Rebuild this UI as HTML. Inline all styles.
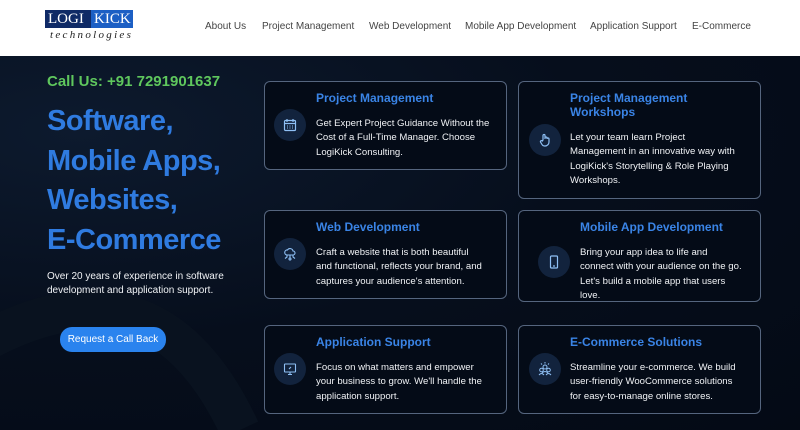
<!DOCTYPE html>
<html><head><style>
*{margin:0;padding:0;box-sizing:border-box}
body{width:800px;height:430px;overflow:hidden;background:#050c18;font-family:"Liberation Sans",sans-serif;position:relative}
.hdr{position:absolute;left:0;top:0;width:800px;height:56px;background:#fff}
.nav{position:absolute;top:21px;font-size:10px;color:#444}
.main{position:absolute;left:0;top:56px;width:800px;height:374px;background:radial-gradient(ellipse at 10% 20%,#0d1a2e 0%,#060e1c 50%,#040a15 100%)}
.card{position:absolute;border:1px solid #55657e;border-radius:6px;background:#040b17}
.t{position:absolute;color:#3a84e6;font-weight:bold;font-size:12px;line-height:14px}
.b{position:absolute;color:#f0f2f5;font-size:9.6px;line-height:14.4px}
.ic{position:absolute;width:32px;height:32px;border-radius:50%;background:#12233d;display:flex;align-items:center;justify-content:center}
</style></head><body>
<div class="hdr">
 <div style="position:absolute;left:45px;top:10px;width:46px;height:18px;background:#0f2a66;color:#fff;font-family:'Liberation Serif',serif;font-size:15px;line-height:18px;padding-left:3px">LOGI</div>
 <div style="position:absolute;left:91px;top:10px;width:42px;height:18px;background:#1c5fc4;color:#fff;font-family:'Liberation Serif',serif;font-size:15px;line-height:18px;padding-left:3px">KICK</div>
 <div style="position:absolute;left:50px;top:29px;font-family:'Liberation Serif',serif;font-style:italic;font-size:11px;letter-spacing:2.3px;color:#222">technologies</div>
 <div class="nav" style="left:205px">About Us</div>
 <div class="nav" style="left:262px">Project Management</div>
 <div class="nav" style="left:369px">Web Development</div>
 <div class="nav" style="left:465px">Mobile App Development</div>
 <div class="nav" style="left:590px">Application Support</div>
 <div class="nav" style="left:692px">E-Commerce</div>
</div>
<div class="main">
 <svg width="260" height="374" style="position:absolute;left:0;top:0"><path d="M-40 300 Q150 180 240 374" stroke="#09121f" stroke-width="40" fill="none"/></svg>
 <div style="position:absolute;left:47px;top:17px;color:#5fc75d;font-weight:bold;font-size:15px">Call Us: +91 7291901637</div>
 <div style="position:absolute;left:47px;top:46px;color:#2f7be0;font-weight:bold;font-size:29px;letter-spacing:-0.5px;line-height:39.5px">Software,<br>Mobile Apps,<br>Websites,<br>E-Commerce</div>
 <div style="position:absolute;left:47px;top:214px;color:#f0f2f5;font-size:10px;line-height:14px">Over 20 years of experience in software<br>development and application support.</div>
 <div style="position:absolute;left:60px;top:271px;width:106px;height:25px;border-radius:12px;background:#2a83ee;color:#fff;font-size:10px;line-height:25px;text-align:center">Request a Call Back</div>
</div>

<div class="card" style="left:264px;top:81px;width:243px;height:89px"></div>
<div class="ic" style="left:274px;top:109px"><svg width="14" height="14" viewBox="0 0 14 14" fill="none" stroke="#8fc0f5" stroke-width="1.2"><rect x="1.5" y="2.5" width="11" height="10" rx="1"/><path d="M4 1v3M10 1v3M1.5 5.5h11"/><path d="M4 8h1M6.5 8h1M9 8h1M4 10h1M6.5 10h1M9 10h1" stroke-width="1"/></svg></div>
<div class="t" style="left:316px;top:91px">Project Management</div>
<div class="b" style="left:316px;top:117px">Get Expert Project Guidance Without the<br>Cost of a Full-Time Manager. Choose<br>LogiKick Consulting.</div>

<div class="card" style="left:518px;top:81px;width:243px;height:118px"></div>
<div class="ic" style="left:529px;top:124px"><svg width="14" height="14" viewBox="0 0 14 14" fill="none" stroke="#8fc0f5" stroke-width="1.2"><path d="M5 7V2.5a1 1 0 0 1 2 0V6l0-1a1 1 0 0 1 2 0v1a1 1 0 0 1 2 0v3a4 4 0 0 1-4 4H6.5A3 3 0 0 1 4 11.5L2.5 9a1 1 0 0 1 1.7-1z"/></svg></div>
<div class="t" style="left:570px;top:91px">Project Management<br>Workshops</div>
<div class="b" style="left:570px;top:131px">Let your team learn Project<br>Management in an innovative way with<br>LogiKick's Storytelling &amp; Role Playing<br>Workshops.</div>

<div class="card" style="left:264px;top:210px;width:243px;height:89px"></div>
<div class="ic" style="left:274px;top:238px"><svg width="14" height="14" viewBox="0 0 14 14" fill="none" stroke="#8fc0f5" stroke-width="1.1"><path d="M4 8a2.5 2.5 0 0 1 .5-5A3 3 0 0 1 10 4a2 2 0 0 1 0 4z"/><path d="M7 8v3M4 8v2l-2 1.5M10 8v2l2 1.5"/><circle cx="7" cy="12" r="1"/></svg></div>
<div class="t" style="left:316px;top:220px">Web Development</div>
<div class="b" style="left:316px;top:246px">Craft a website that is both beautiful<br>and functional, reflects your brand, and<br>captures your audience's attention.</div>

<div class="card" style="left:518px;top:210px;width:243px;height:92px"></div>
<div class="ic" style="left:538px;top:246px"><svg width="14" height="14" viewBox="0 0 14 14" fill="none" stroke="#8fc0f5" stroke-width="1.2"><rect x="3.5" y="1" width="7" height="12" rx="1"/><path d="M6 11h2"/></svg></div>
<div class="t" style="left:580px;top:220px">Mobile App Development</div>
<div class="b" style="left:580px;top:246px">Bring your app idea to life and<br>connect with your audience on the go.<br>Let's build a mobile app that users<br>love.</div>

<div class="card" style="left:264px;top:325px;width:243px;height:89px"></div>
<div class="ic" style="left:274px;top:353px"><svg width="14" height="14" viewBox="0 0 14 14" fill="none" stroke="#8fc0f5" stroke-width="1.1"><rect x="1.5" y="2" width="11" height="8" rx="0.5"/><path d="M5 12.5h4M7 10v2.5M6 7l2-2"/></svg></div>
<div class="t" style="left:316px;top:335px">Application Support</div>
<div class="b" style="left:316px;top:361px">Focus on what matters and empower<br>your business to grow. We'll handle the<br>application support.</div>

<div class="card" style="left:518px;top:325px;width:243px;height:89px"></div>
<div class="ic" style="left:529px;top:353px"><svg width="16" height="16" viewBox="0 0 16 16" fill="none" stroke="#8fc0f5" stroke-width="1"><circle cx="8" cy="6" r="2"/><circle cx="4.5" cy="9" r="1.8"/><circle cx="11.5" cy="9" r="1.8"/><path d="M2 14q2.5-3 5 0M9 14q2.5-3 5 0M5 12q3-3 6 0M8 1v1.5M4 2.5l1 1M12 2.5l-1 1"/></svg></div>
<div class="t" style="left:570px;top:335px">E-Commerce Solutions</div>
<div class="b" style="left:570px;top:361px">Streamline your e-commerce. We build<br>user-friendly WooCommerce solutions<br>for easy-to-manage online stores.</div>
</body></html>
